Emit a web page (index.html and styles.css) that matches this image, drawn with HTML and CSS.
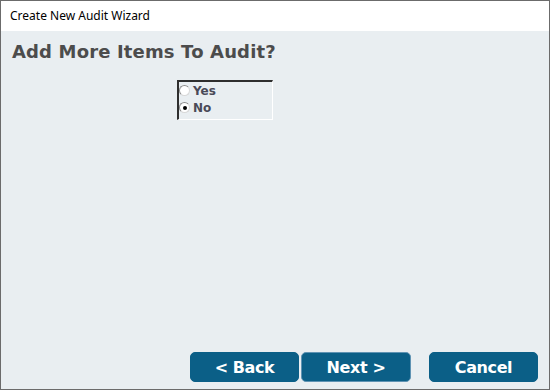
FILE: index.html
```html
<!DOCTYPE html>
<html lang="en">

<head>
    <meta charset="UTF-8">
    <title>Create New Audit Wizard</title>
    <link rel="stylesheet" href="styles.css">
</head>

<body>

    <!-- Wizard window -->
    <div class="wizard">
        <div class="title-bar">Create New Audit Wizard</div>

        <div class="content">
            <h2>Add More Items To Audit?</h2>

            <div class="choice-box">
                <label class="choice">
                    <span class="radio"></span>
                    Yes
                </label>
                <label class="choice">
                    <span class="radio checked"></span>
                    No
                </label>
            </div>

            <div class="buttons">
                <button class="btn">&lt; Back</button>
                <button class="btn focused">Next &gt;</button>
                <button class="btn cancel">Cancel</button>
            </div>
        </div>
    </div>

</body>

</html>
```

FILE: styles.css
```css
/* General Styles */
html,
body {
    margin: 0;
    padding: 0;
}

.wizard {
    width: 550px;
    height: 390px;
    box-sizing: border-box;
    border: 1px solid #6b6b6b;
    display: flex;
    flex-direction: column;
    background-color: #e9eef1;
}

.title-bar {
    height: 30px;
    background: #ffffff;
    font-family: "Noto Sans", "Liberation Sans", sans-serif;
    font-size: 12px;
    line-height: 30px;
    padding-left: 9px;
    color: #000;
}

.content {
    flex: 1;
    display: flex;
    flex-direction: column;
    padding: 0 9px 7px 11px;
}

h2 {
    margin: 10px 0 0 0;
    font-family: "DejaVu Sans", Verdana, sans-serif;
    font-size: 18px;
    font-weight: bold;
    letter-spacing: 0.15px;
    color: #4c4c4c;
    line-height: 22px;
}

.choice-box {
    margin: 17px 0 0 165px;
    width: 96px;
    height: 40px;
    box-sizing: border-box;
    border-top: 2px solid #2e2e2e;
    border-left: 2px solid #2e2e2e;
    border-right: 1px solid #ffffff;
    border-bottom: 1px solid #ffffff;
    padding-top: 0;
}

.choice {
    display: flex;
    align-items: center;
    gap: 3px;
    height: 17px;
    font-family: "DejaVu Sans", Verdana, sans-serif;
    font-size: 12px;
    font-weight: bold;
    color: #4a4a58;
}

.radio {
    width: 11px;
    height: 11px;
    box-sizing: border-box;
    border-radius: 50%;
    border: 1px solid #8c8c8c;
    border-right-color: #d8d8d8;
    border-bottom-color: #d8d8d8;
    background: #ffffff;
    display: flex;
    justify-content: center;
    align-items: center;
}

.radio.checked::after {
    content: "";
    width: 4px;
    height: 4px;
    border-radius: 50%;
    background: #000;
}

.buttons {
    margin-top: auto;
    display: flex;
    padding-left: 178px;
}

.btn {
    width: 110px;
    height: 30px;
    margin-right: 2px;
    background-color: #0b5f87;
    color: #ffffff;
    border: 1px solid #0b5f87;
    border-radius: 5px;
    font-family: "DejaVu Sans", Verdana, sans-serif;
    font-size: 16px;
    font-weight: bold;
    letter-spacing: -0.4px;
    padding: 0;
}

.btn.focused {
    width: 111px;
    border-color: #5f93b3;
}

.btn.cancel {
    margin-left: 16px;
}
```
